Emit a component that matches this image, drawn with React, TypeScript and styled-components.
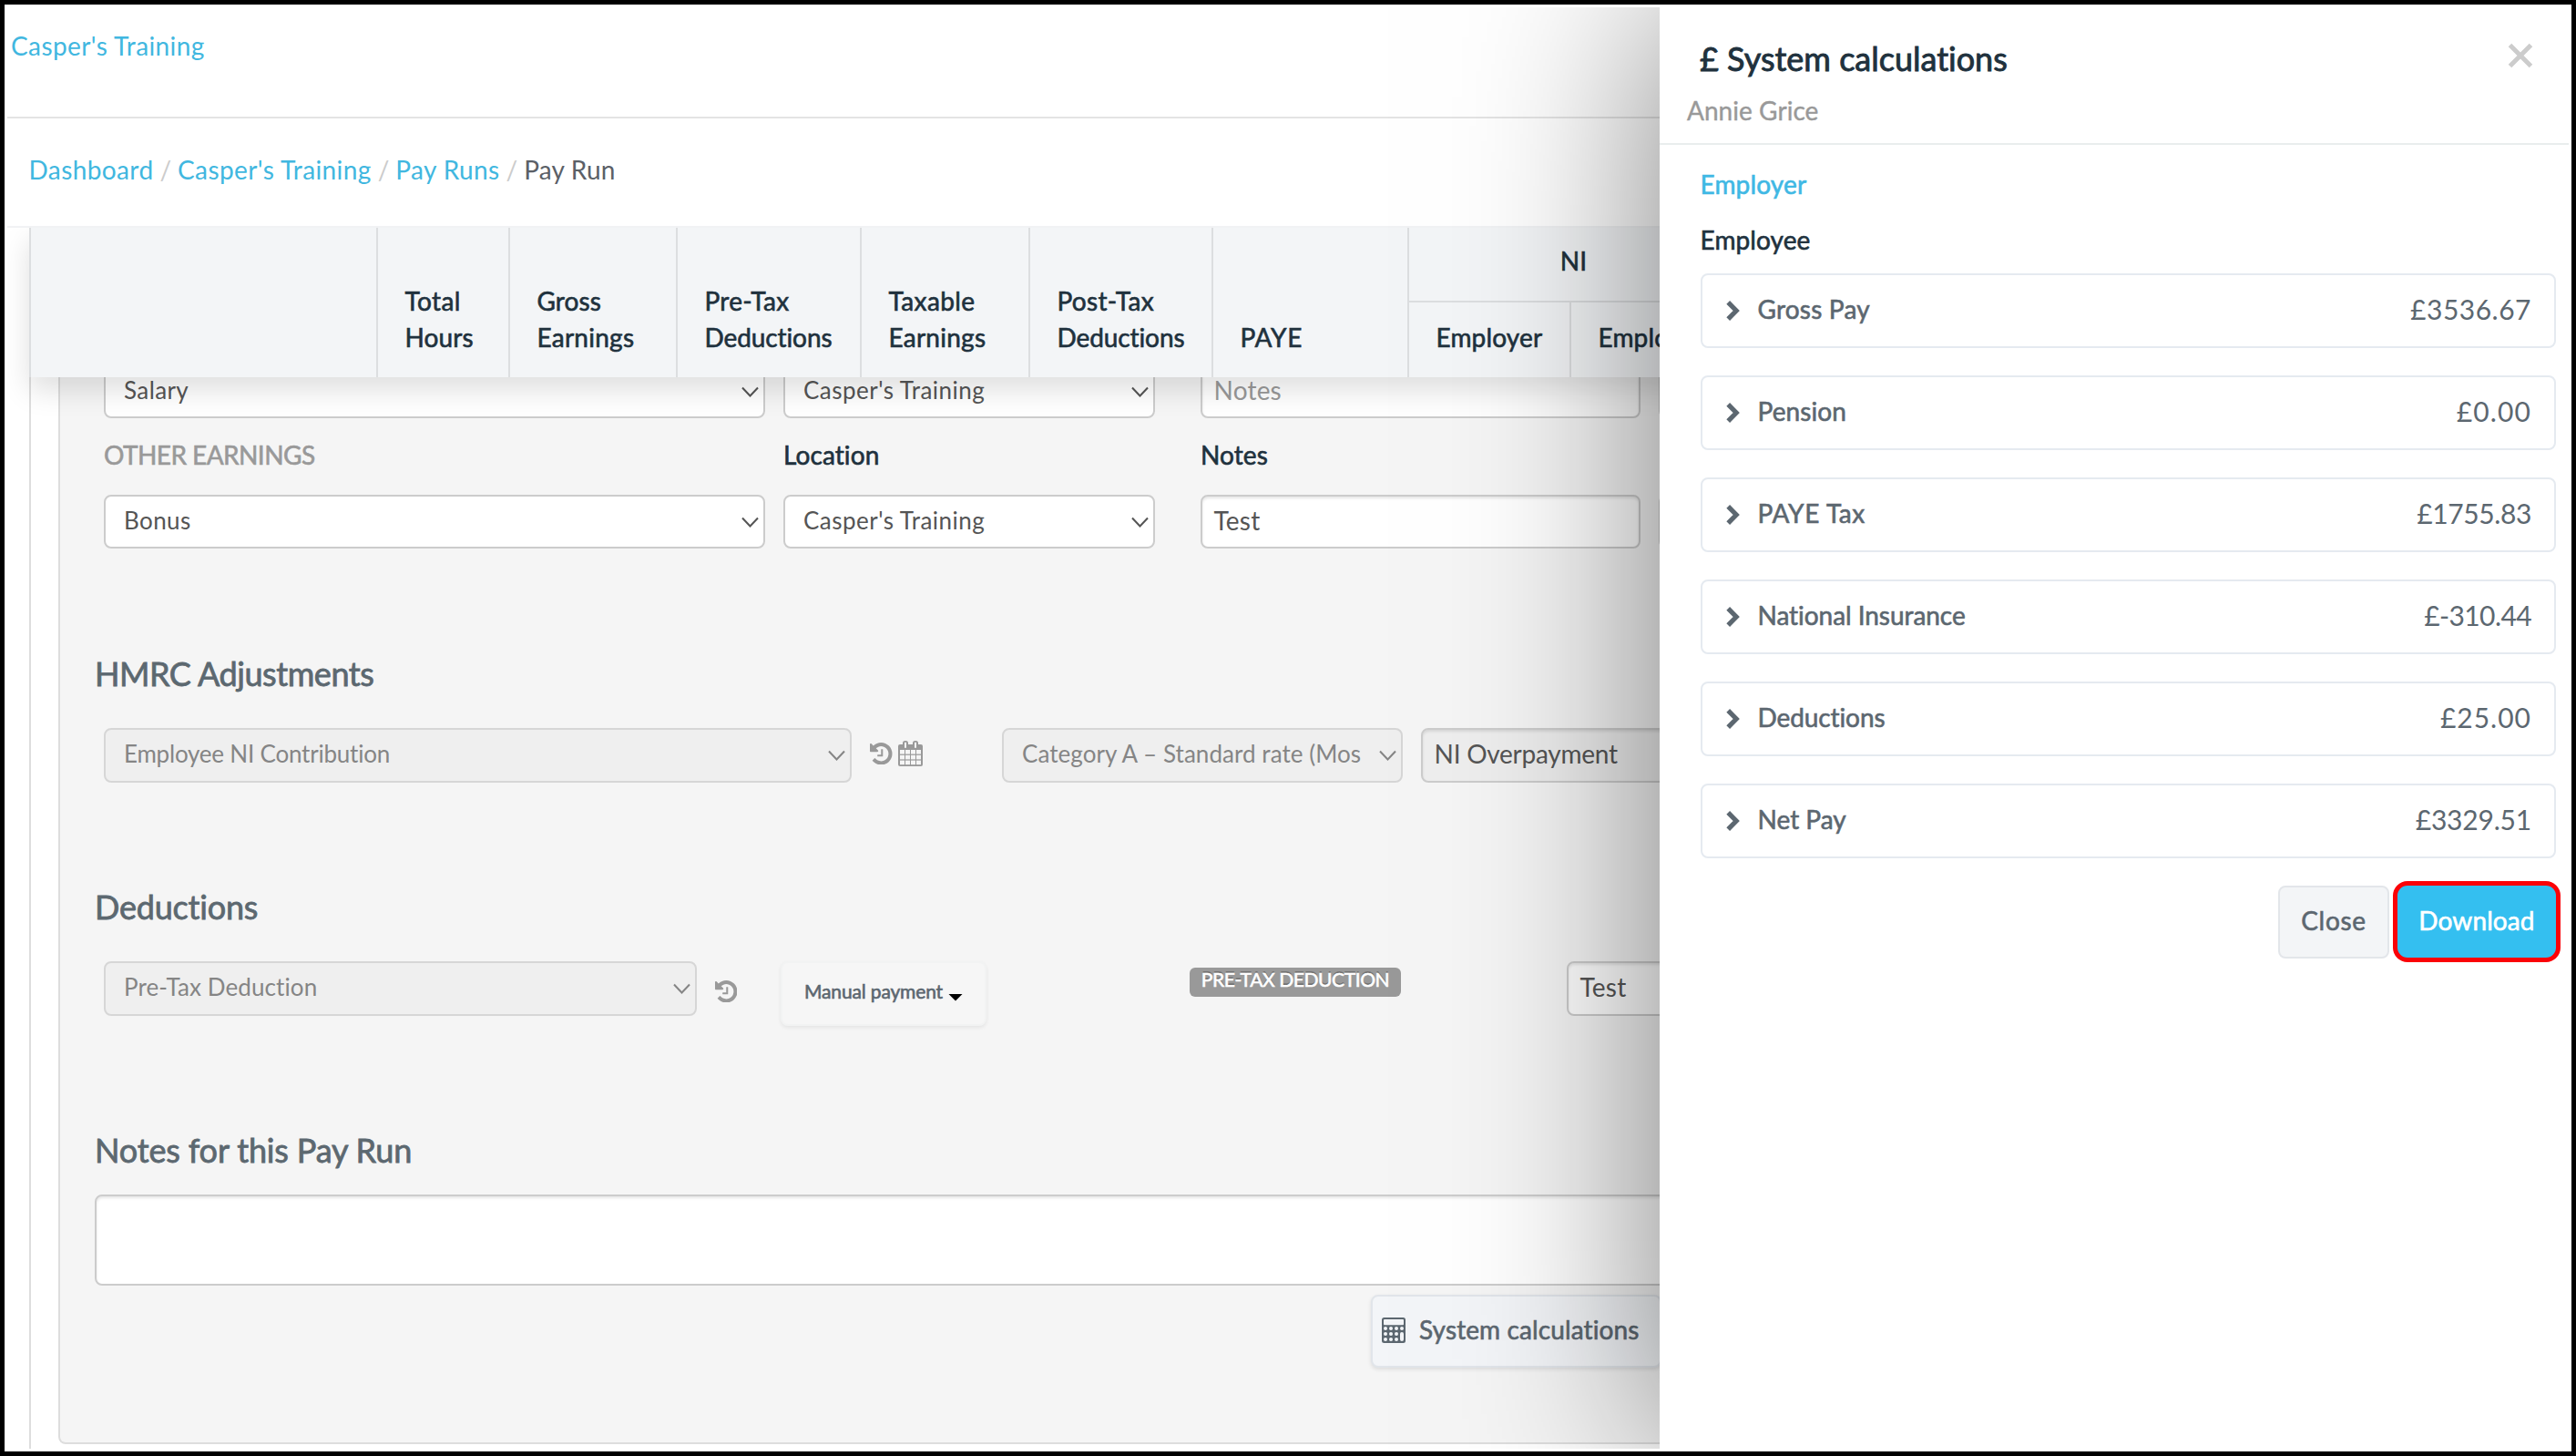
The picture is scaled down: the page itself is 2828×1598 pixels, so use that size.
import React from "react";
import styled, { createGlobalStyle } from "styled-components";

const GlobalStyle = createGlobalStyle`
  * { box-sizing: border-box; }
  body {
    margin: 0;
    background: #000;
    font-family: Lato, "Open Sans", sans-serif;
    font-variant-ligatures: none;
    color: #5c6770;
  }
`;

const Frame = styled.div`
  width: 2828px;
  height: 1598px;
  padding: 3px;
  border: 5px solid #000;
  background: #fff;
`;

const Page = styled.div`
  position: relative;
  width: 100%;
  height: 100%;
  overflow: hidden;
  background: #fff;
`;

/* A run of text; $ls is the tracking in pixels. */
const Text = styled.span<{ $ls?: number }>`
  letter-spacing: ${(p) => p.$ls ?? 0.2}px;
  white-space: nowrap;
`;

const Strong = styled(Text)`
  -webkit-text-stroke: 0.6px currentColor;
`;

/* ---------- top of the page ---------- */

const TopBar = styled.header`
  height: 122px;
  padding: 28px 0 0 4px;
  border-bottom: 2px solid #e4e4e4;
  font-size: 28px;
  line-height: 28px;
`;

const Link = styled(Text)`
  color: #41b7e0;
`;

const Breadcrumbs = styled.nav`
  display: flex;
  height: 120px;
  padding: 42px 0 0 23.5px;
  border-bottom: 2px solid #f1f2f4;
  font-size: 28px;
  line-height: 28px;
  color: #5b6067;
`;

const Slash = styled.span`
  width: 26.5px;
  text-align: center;
  color: #ccc;
`;

/* ---------- column headings ---------- */

const TableHead = styled.div`
  position: relative;
  z-index: 1;
  display: flex;
  width: 2200px;
  height: 164px;
  margin-left: 24px;
  background: #f3f5f7;
  box-shadow: 0 14px 30px rgba(0, 0, 0, 0.13);
  clip-path: inset(0 0 -60px -24px);
  font-size: 28px;
  line-height: 40px;
  color: #20313d;
`;

const HeadCell = styled.div<{ $w: number }>`
  display: flex;
  flex: none;
  flex-direction: column;
  justify-content: flex-end;
  width: ${(p) => p.$w}px;
  padding: 0 0 24px 29.5px;
  border-left: 2px solid #dcdee0;
`;

const HeadGroup = styled.div`
  flex: none;
  width: 363px;
`;

const GroupTitle = styled.div`
  height: 82px;
  padding-top: 16px;
  border-left: 2px solid #dcdee0;
  border-bottom: 2px solid #dcdee0;
  text-align: center;
`;

const GroupCells = styled.div`
  display: flex;
  height: 82px;
`;

/* ---------- employee panel ---------- */

const TableBody = styled.div`
  height: 1176px;
  margin-left: 24px;
  border-left: 2px solid #ddd;
`;

const Panel = styled.section`
  display: flow-root;
  width: 2200px;
  height: 1171px;
  margin-left: 30px;
  padding-left: 38px;
  border: 2px solid #ddd;
  border-top: 0;
  border-bottom-left-radius: 8px;
  background: #f5f5f5;
`;

const Row = styled.div<{ $mt?: number; $h?: number }>`
  display: flex;
  align-items: center;
  height: ${(p) => p.$h ?? 60}px;
  margin-top: ${(p) => p.$mt ?? 0}px;
  padding-left: 10px;
`;

const Gap = styled.div<{ $w: number }>`
  flex: none;
  width: ${(p) => p.$w}px;
`;

const LabelRow = styled.div`
  display: flex;
  height: 84px;
  padding: 26px 0 0 10px;
  font-size: 28px;
  line-height: 28px;
`;

const Label = styled(Strong)<{ $w: number; $muted?: boolean }>`
  flex: none;
  width: ${(p) => p.$w}px;
  color: ${(p) => (p.$muted ? "#999" : "#20313d")};
`;

const Heading = styled.h3<{ $mt: number; $ls: number }>`
  height: 40px;
  margin: ${(p) => p.$mt}px 0 0;
  font-size: 36px;
  font-weight: 400;
  line-height: 42px;
  letter-spacing: ${(p) => p.$ls}px;
  color: #5c6870;
  -webkit-text-stroke: 0.8px currentColor;
`;

const SelectBox = styled.div<{ $w: number; $disabled?: boolean }>`
  display: flex;
  flex: none;
  align-items: center;
  justify-content: space-between;
  width: ${(p) => p.$w}px;
  height: 100%;
  padding: 0 5.5px 0 20px;
  border: 2px solid ${(p) => (p.$disabled ? "#d6d6d6" : "#ccc")};
  border-radius: 8px;
  background: ${(p) => (p.$disabled ? "#efefef" : "#fff")};
  color: ${(p) => (p.$disabled ? "#858585" : "#555")};
  font-size: 26px;
  line-height: 28px;

  ${Text} {
    padding-bottom: 4px;
  }
`;

const InputBox = styled.div<{ $w: number; $disabled?: boolean; $placeholder?: boolean }>`
  flex: none;
  width: ${(p) => p.$w}px;
  height: 100%;
  padding: 12px 0 0 12.5px;
  border: 2px solid #ccc;
  border-radius: 8px;
  background: ${(p) => (p.$disabled ? "#eee" : "#fff")};
  box-shadow: inset 0 2px 3px rgba(0, 0, 0, 0.1);
  color: ${(p) => (p.$placeholder ? "#999" : "#555")};
  font-size: 28px;
  line-height: 28px;
`;

const NotesArea = styled.div`
  height: 100px;
  margin-top: 30px;
  border: 2px solid #ccc;
  border-radius: 8px;
  background: #fff;
  box-shadow: inset 0 2px 3px rgba(0, 0, 0, 0.1);
`;

const IconSlot = styled.div<{ $mt?: number; $mb?: number }>`
  display: flex;
  flex: none;
  align-items: center;
  gap: 6.5px;
  margin: ${(p) => p.$mt ?? 0}px 0 ${(p) => p.$mb ?? 0}px;
`;

const ManualButton = styled.div`
  display: flex;
  flex: none;
  align-items: center;
  justify-content: space-between;
  width: 226px;
  height: 71px;
  margin-top: 10px;
  padding: 0 24px 0 24px;
  border: 2px solid #f2f3f3;
  border-radius: 8px;
  background: #f6f6f6;
  box-shadow: 0 2px 4px rgba(0, 0, 0, 0.07);
  font-size: 21px;
  line-height: 24px;
  color: #5c6770;

  ${Strong} {
    padding-bottom: 5px;
  }
`;

const Caret = styled.span`
  width: 16px;
  height: 8px;
  margin-top: 9px;
  background: #000;
  clip-path: polygon(0 0, 100% 0, 50% 100%);
`;

const Badge = styled.div`
  flex: none;
  width: 232px;
  height: 32px;
  margin-top: -14px;
  border-radius: 6px;
  background: #999;
  color: #fff;
  font-size: 21px;
  line-height: 26px;
  text-align: center;
  text-shadow: 0 -2px 0 rgba(0, 0, 0, 0.25);
`;

const PanelActions = styled.div`
  display: flex;
  margin-top: 10px;
  padding-left: 1401px;
`;

const SystemButton = styled.div`
  display: flex;
  align-items: center;
  width: 319px;
  height: 80px;
  padding-left: 10px;
  border: 2px solid #e1e5ea;
  border-radius: 8px;
  background: #f3f5f8;
  box-shadow: 0 2px 4px rgba(0, 0, 0, 0.1);
  font-size: 28px;
  line-height: 28px;
  color: #5c6770;

  svg {
    margin-bottom: 3px;
  }

  ${Strong} {
    margin-left: 15px;
    padding-bottom: 4px;
  }
`;

/* ---------- drawer ---------- */

const Drawer = styled.aside`
  position: absolute;
  z-index: 2;
  top: 0;
  right: 0;
  bottom: 0;
  width: 998px;
  background: #fff;
  box-shadow: 0 0 200px rgba(0, 0, 0, 0.5);
`;

const DrawerHead = styled.div`
  display: flex;
  justify-content: space-between;
  height: 151px;
  padding: 36px 39px 0 30px;
  border-bottom: 2px solid #e9eded;
`;

const DrawerTitles = styled.div`
  display: flex;
  flex-direction: column;
`;

const DrawerTitle = styled.h2`
  margin: 0 0 23px 14px;
  font-size: 36px;
  font-weight: 400;
  line-height: 40px;
  letter-spacing: 0;
  color: #20313d;
  -webkit-text-stroke: 0.9px currentColor;
`;

const PersonName = styled(Strong)`
  font-size: 28px;
  line-height: 28px;
  color: #999;
  -webkit-text-stroke-width: 0.4px;
`;

const CloseIcon = styled.svg`
  width: 28px;
  height: 28px;
  margin-top: 3px;
`;

const DrawerBody = styled.div`
  padding: 29px 14px 0 45px;
`;

const Tab = styled.div<{ $active?: boolean }>`
  height: 61px;
  margin-left: -0.5px;
  font-size: 28px;
  line-height: 28px;
  color: ${(p) => (p.$active ? "#20313d" : "#3fb8e4")};
`;

const CardList = styled.div`
  display: flex;
  flex-direction: column;
  gap: 30px;
  margin-top: -10px;
`;

const Card = styled.div`
  display: flex;
  align-items: center;
  height: 82px;
  padding: 0 25px 0 26px;
  border: 2px solid #e5eaf0;
  border-radius: 8px;
  font-size: 28px;
  line-height: 30px;
  color: #5c6770;
`;

const CardName = styled(Strong)`
  flex: 1;
  margin-left: 19.5px;
  padding-bottom: 4px;
`;

const Amount = styled(Text)`
  padding-bottom: 5px;
  font-size: 30px;
`;

const DrawerActions = styled.div`
  display: flex;
  justify-content: flex-end;
  gap: 9px;
  margin-top: 30px;
`;

const Button = styled.div<{ $w: number; $primary?: boolean }>`
  width: ${(p) => p.$w}px;
  height: ${(p) => (p.$primary ? 79 : 80)}px;
  border: ${(p) => (p.$primary ? "0" : "2px solid #e3e6ea")};
  border-radius: ${(p) => (p.$primary ? 11 : 8)}px;
  padding-top: ${(p) => (p.$primary ? 24 : 22)}px;
  background: ${(p) => (p.$primary ? "#34bff0" : "#f3f5f7")};
  box-shadow: ${(p) => (p.$primary ? "0 0 0 5px #fb0207" : "none")};
  color: ${(p) => (p.$primary ? "#fff" : "#5c6770")};
  font-size: 28px;
  line-height: 28px;
  text-align: center;
`;

/* ---------- icons ---------- */

const DownChevron = () => (
  <svg width="19" height="12" viewBox="0 0 19 12" fill="none" stroke="currentColor" strokeWidth="2">
    <path d="M1 1.5 9.5 10.5 18 1.5" />
  </svg>
);

const RightChevron = () => (
  <svg width="15" height="22" viewBox="0 0 15 22" fill="none" stroke="#5c6770" strokeWidth="5.2">
    <path d="M2.2 1.9 11.2 11 2.2 20.1" />
  </svg>
);

const HistoryIcon = () => (
  <svg width="24.5" height="24.5" viewBox="0 0 1536 1536" fill="#999">
    <path
      transform="translate(-128 -128)"
      d="M1664 896q0 156-61 298t-164 245-245 164-298 61q-172 0-327-72.500t-264-204.500q-7-10-6.500-22.500t8.500-20.500l137-138q10-9 25-9 16 2 23 12 73 95 179 147t225 52q104 0 198.500-40.500t163.500-109.500 109.500-163.500 40.500-198.500-40.500-198.500-109.500-163.500-163.500-109.500-198.500-40.500q-98 0-188 35.500t-160 101.500l137 138q31 30 14 69-17 40-59 40h-448q-26 0-45-19t-19-45v-448q0-42 40-59 39-17 69 14l130 129q107-101 244.500-156.500t284.500-55.500q156 0 298 61t245 164 164 245 61 298zm-640-288v448q0 14-9 23t-23 9h-320q-14 0-23-9t-9-23v-64q0-14 9-23t23-9h224v-352q0-14 9-23t23-9h64q14 0 23 9t9 23z"
    />
  </svg>
);

const CalendarIcon = () => (
  <svg width="27" height="28" viewBox="0 0 27 28">
    <rect x="0" y="4" width="27" height="24" rx="2" fill="#999" />
    <rect x="5" y="0" width="6" height="9.500" rx="2.500" fill="#999" />
    <rect x="16" y="0" width="6" height="9.500" rx="2.500" fill="#999" />
    <rect x="7" y="1.800" width="2" height="6" fill="#f5f5f5" />
    <rect x="18" y="1.800" width="2" height="6" fill="#f5f5f5" />
    {[10, 15.8, 21.6].map((y) =>
      [2, 8, 14, 20].map((x) => (
        <rect key={`${x}-${y}`} x={x} y={y} width="5" height="4.600" fill="#f5f5f5" />
      ))
    )}
  </svg>
);

const CalculatorIcon = () => (
  <svg width="26" height="28" viewBox="0 0 26 28">
    <rect width="26" height="28" rx="2.500" fill="#5c6770" />
    <rect x="2" y="2" width="22" height="6.200" rx="1" fill="#f3f5f8" />
    {[12, 18, 24].map((y) =>
      [4, 10, 16].map((x) => <circle key={`${x}-${y}`} cx={x} cy={y} r="2" fill="#f3f5f8" />)
    )}
    <circle cx="22" cy="12" r="2" fill="#f3f5f8" />
    <rect x="20" y="16" width="4" height="10" rx="2" fill="#f3f5f8" />
  </svg>
);

/* ---------- data ---------- */

type Piece = [text: string, tracking: number];

const COLUMNS: { width: number; lines: Piece[] }[] = [
  { width: 381, lines: [] },
  { width: 145, lines: [["Total", 0.4], ["Hours", 0.1]] },
  { width: 184, lines: [["Gross", 0.1], ["Earnings", 0.25]] },
  { width: 202, lines: [["Pre-Tax", 0.3], ["Deductions", -0.1]] },
  { width: 185, lines: [["Taxable", 0.4], ["Earnings", 0.25]] },
  { width: 201, lines: [["Post-Tax", 0.3], ["Deductions", -0.1]] },
  { width: 215, lines: [["PAYE", 0.6]] },
];

const TOTALS: { name: Piece; amount: Piece }[] = [
  { name: ["Gross Pay", 0.2], amount: ["£3536.67", 0.5] },
  { name: ["Pension", 0.1], amount: ["£0.00", 1.1] },
  { name: ["PAYE Tax", 0.6], amount: ["£1755.83", -0.4] },
  { name: ["National Insurance", -0.05], amount: ["£-310.44", -0.6] },
  { name: ["Deductions", -0.1], amount: ["£25.00", 1] },
  { name: ["Net Pay", 0], amount: ["£3329.51", -0.2] },
];

const Select = ({ w, text, disabled }: { w: number; text: Piece; disabled?: boolean }) => (
  <SelectBox $w={w} $disabled={disabled}>
    <Text $ls={text[1]}>{text[0]}</Text>
    <DownChevron />
  </SelectBox>
);

export default function App() {
  return (
    <>
      <GlobalStyle />
      <Frame>
        <Page>
          <TopBar>
            <Link $ls={0.4}>Casper's Training</Link>
          </TopBar>
          <Breadcrumbs>
            <Link $ls={0.4}>Dashboard</Link>
            <Slash>/</Slash>
            <Link $ls={0.4}>Casper's Training</Link>
            <Slash>/</Slash>
            <Link $ls={0.4}>Pay Runs</Link>
            <Slash>/</Slash>
            <Text $ls={0.2}>Pay Run</Text>
          </Breadcrumbs>

          <TableHead>
            {COLUMNS.map((c, i) => (
              <HeadCell key={i} $w={c.width}>
                {c.lines.map(([t, ls]) => (
                  <Strong key={t} $ls={ls}>{t}</Strong>
                ))}
              </HeadCell>
            ))}
            <HeadGroup>
              <GroupTitle>
                <Strong>NI</Strong>
              </GroupTitle>
              <GroupCells>
                <HeadCell $w={178}>
                  <Strong $ls={0.15}>Employer</Strong>
                </HeadCell>
                <HeadCell $w={185}>
                  <Strong $ls={0.15}>Employee</Strong>
                </HeadCell>
              </GroupCells>
            </HeadGroup>
          </TableHead>

          <TableBody>
            <Panel>
              <Row $mt={-14} $h={59}>
                <Select w={726} text={["Salary", 0.4]} />
                <Gap $w={20} />
                <Select w={408} text={["Casper's Training", 0.47]} />
                <Gap $w={50} />
                <InputBox $w={483} $placeholder>
                  <Text>Notes</Text>
                </InputBox>
                <Gap $w={20} />
                <InputBox $w={300} />
              </Row>
              <LabelRow>
                <Label $w={746} $ls={-0.55} $muted>OTHER EARNINGS</Label>
                <Label $w={458} $ls={0.1}>Location</Label>
                <Label $w={300} $ls={0.1}>Notes</Label>
              </LabelRow>
              <Row $h={59}>
                <Select w={726} text={["Bonus", 0.4]} />
                <Gap $w={20} />
                <Select w={408} text={["Casper's Training", 0.47]} />
                <Gap $w={50} />
                <InputBox $w={483}>
                  <Text>Test</Text>
                </InputBox>
                <Gap $w={20} />
                <InputBox $w={300} />
              </Row>

              <Heading $mt={116} $ls={-0.45}>HMRC Adjustments</Heading>
              <Row $mt={41}>
                <Select w={821} text={["Employee NI Contribution", -0.21]} disabled />
                <Gap $w={20} />
                <IconSlot $mb={4}>
                  <HistoryIcon />
                  <CalendarIcon />
                </IconSlot>
                <Gap $w={87} />
                <Select w={440} text={["Category A – Standard rate (Mos", 0.05]} disabled />
                <Gap $w={20} />
                <InputBox $w={400} $disabled>
                  <Text $ls={-0.25}>NI Overpayment</Text>
                </InputBox>
              </Row>

              <Heading $mt={115} $ls={-0.2}>Deductions</Heading>
              <Row $mt={41}>
                <Select w={651} text={["Pre-Tax Deduction", 0.1]} disabled />
                <Gap $w={19.5} />
                <IconSlot $mt={6}>
                  <HistoryIcon />
                </IconSlot>
                <Gap $w={48} />
                <ManualButton>
                  <Strong $ls={-0.15}>Manual payment</Strong>
                  <Caret />
                </ManualButton>
                <Gap $w={223} />
                <Badge>
                  <Strong $ls={-0.4}>PRE-TAX DEDUCTION</Strong>
                </Badge>
                <Gap $w={182} />
                <InputBox $w={400}>
                  <Text>Test</Text>
                </InputBox>
              </Row>

              <Heading $mt={126} $ls={-0.15}>Notes for this Pay Run</Heading>
              <NotesArea />
              <PanelActions>
                <SystemButton>
                  <CalculatorIcon />
                  <Strong $ls={0.12}>System calculations</Strong>
                </SystemButton>
              </PanelActions>
            </Panel>
          </TableBody>

          <Drawer>
            <DrawerHead>
              <DrawerTitles>
                <DrawerTitle>£ System calculations</DrawerTitle>
                <PersonName $ls={0.05}>Annie Grice</PersonName>
              </DrawerTitles>
              <CloseIcon viewBox="0 0 28 28" stroke="#ccc" strokeWidth="5">
                <path d="M2.500 2.500 25.500 25.500M25.500 2.500 2.500 25.500" />
              </CloseIcon>
            </DrawerHead>
            <DrawerBody>
              <Tab>
                <Strong $ls={0.15}>Employer</Strong>
              </Tab>
              <Tab $active>
                <Strong $ls={0.1}>Employee</Strong>
              </Tab>
              <CardList>
                {TOTALS.map(({ name, amount }) => (
                  <Card key={name[0]}>
                    <RightChevron />
                    <CardName $ls={name[1]}>{name[0]}</CardName>
                    <Amount $ls={amount[1]}>{amount[0]}</Amount>
                  </Card>
                ))}
              </CardList>
              <DrawerActions>
                <Button $w={122}>
                  <Strong $ls={0.7}>Close</Strong>
                </Button>
                <Button $w={174} $primary>
                  <Strong $ls={0.1}>Download</Strong>
                </Button>
              </DrawerActions>
            </DrawerBody>
          </Drawer>
        </Page>
      </Frame>
    </>
  );
}
